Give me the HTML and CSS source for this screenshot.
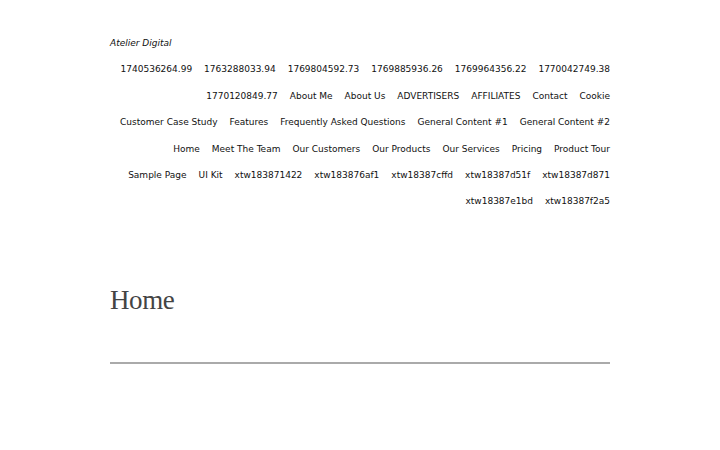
FILE: index.html
```html
<!DOCTYPE html>
<html lang="en">
<head>
<meta charset="utf-8">
<title>Home – Atelier Digital</title>
<link rel="stylesheet" href="styles.css">
</head>
<body>
<div class="page">
  <header class="site-header">
    <p class="site-title">Atelier Digital</p>
    <nav class="menu">
      <a>1740536264.99</a>
      <a>1763288033.94</a>
      <a>1769804592.73</a>
      <a>1769885936.26</a>
      <a>1769964356.22</a>
      <a>1770042749.38</a>
      <a>1770120849.77</a>
      <a>About Me</a>
      <a>About Us</a>
      <a>ADVERTISERS</a>
      <a>AFFILIATES</a>
      <a>Contact</a>
      <a>Cookie</a>
      <a>Customer Case Study</a>
      <a>Features</a>
      <a>Frequently Asked Questions</a>
      <a>General Content #1</a>
      <a>General Content #2</a>
      <a>Home</a>
      <a>Meet The Team</a>
      <a>Our Customers</a>
      <a>Our Products</a>
      <a>Our Services</a>
      <a>Pricing</a>
      <a>Product Tour</a>
      <a>Sample Page</a>
      <a>UI Kit</a>
      <a>xtw183871422</a>
      <a>xtw183876af1</a>
      <a>xtw18387cffd</a>
      <a>xtw18387d51f</a>
      <a>xtw18387d871</a>
      <a>xtw18387e1bd</a>
      <a>xtw18387f2a5</a>
    </nav>
  </header>
  <main class="content">
    <h1 class="page-title">Home</h1>
    <hr class="rule">
  </main>
</div>
</body>
</html>
```
FILE: styles.css
```css
html, body {
  margin: 0;
  padding: 0;
  background: #fff;
}
body {
  font-family: "DejaVu Sans", sans-serif;
  color: #111;
}
.page {
  width: 500px;
  margin: 0 auto;
  padding-top: 30px;
}
.site-title {
  margin: 0;
  font-size: 9px;
  font-style: italic;
  line-height: 26.4px;
}
.menu {
  display: flex;
  flex-wrap: wrap;
  justify-content: flex-end;
  column-gap: 12px;
  font-size: 9px;
  line-height: 26.4px;
}
.menu a {
  color: #111;
  text-decoration: none;
  white-space: nowrap;
}
.content {
  padding-top: 68px;
}
.page-title {
  margin: 0;
  font-family: "Liberation Serif", serif;
  font-weight: normal;
  font-size: 27px;
  letter-spacing: -0.4px;
  color: #444;
  line-height: 35px;
}
.rule {
  margin: 44px 0 0;
  border: 0;
  height: 2px;
  background: #aaa;
}
```
